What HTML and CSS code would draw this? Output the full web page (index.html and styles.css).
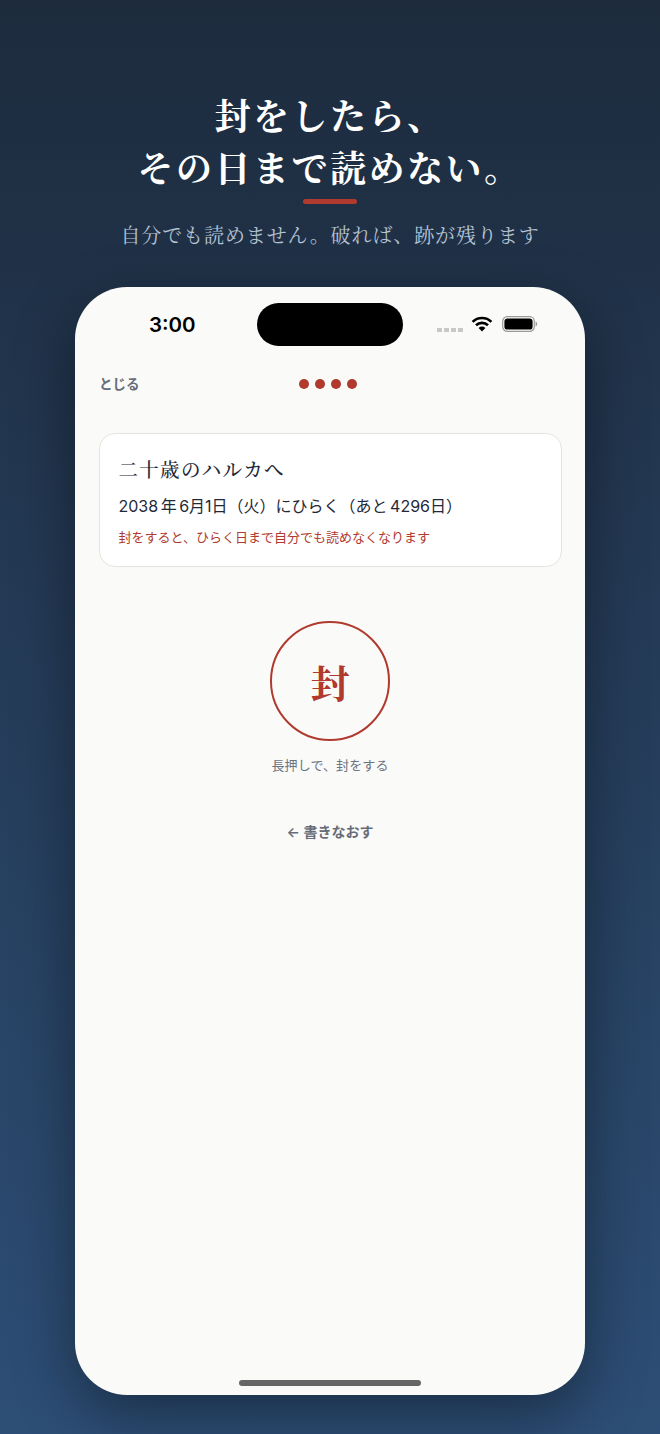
FILE: index.html
```html
<!DOCTYPE html>
<html lang="ja">
<head>
<meta charset="utf-8">
<title>封をしたら</title>
<link rel="stylesheet" href="styles.css">
</head>
<body>
<div class="page">
  <header class="hero">
    <h1 class="hero-title">封をしたら、<br>その日まで読めない。</h1>
    <div class="hero-rule"></div>
    <p class="hero-sub">自分でも読めません。破れば、跡が残ります</p>
  </header>
  <main class="phone">
    <div class="status">
      <span class="time">3:00</span>
      <div class="island"></div>
      <div class="status-icons">
        <div class="signal"><i></i><i></i><i></i><i></i></div>
        <svg class="wifi" width="22" height="16" viewBox="0 0 22 16"><path fill="none" stroke="#000" stroke-width="2.6" d="M1.6 5.9a13.4 13.4 0 0 1 18.8 0"/><path fill="none" stroke="#000" stroke-width="2.6" d="M5 9.3a8.6 8.6 0 0 1 12 0"/><path d="M7.6 11.9a4.9 4.9 0 0 1 6.8 0L11 15.4z"/></svg>
        <svg class="battery" width="36" height="16" viewBox="0 0 36 16"><rect x=".7" y=".7" width="31.6" height="14.6" rx="4.6" fill="none" stroke="#9a9a9a" stroke-width="1.2"/><rect x="2.4" y="2.4" width="28.2" height="11.2" rx="3.2"/><path d="M33.6 5.6c1 .3 1.6 1.3 1.6 2.4s-.6 2.1-1.6 2.4z" fill="#9a9a9a"/></svg>
      </div>
    </div>
    <nav class="topbar">
      <span class="close">とじる</span>
      <div class="dots"><i></i><i></i><i></i><i></i></div>
    </nav>
    <section class="card">
      <h2 class="card-title">二十歳のハルカへ</h2>
      <p class="card-date">2038 年 6月1日（火）にひらく（あと 4296日）</p>
      <p class="card-note">封をすると、ひらく日まで自分でも読めなくなります</p>
    </section>
    <div class="seal-wrap">
      <div class="seal">封</div>
      <p class="seal-hint">長押しで、封をする</p>
      <p class="back">← 書きなおす</p>
    </div>
    <div class="home"></div>
  </main>
</div>
</body>
</html>
```
FILE: styles.css
```css
* { box-sizing: border-box; }
html, body { margin: 0; padding: 0; }
body {
  width: 660px;
  height: 1434px;
  overflow: hidden;
  font-family: "Inter", "Noto Sans CJK JP", "Noto Sans", sans-serif;
  background: linear-gradient(180deg, #1d2b3d 0%, #2d4e76 100%);
}
.page {
  height: 1434px;
  display: flex;
  flex-direction: column;
  align-items: center;
  padding-top: 89px;
}
.hero { text-align: center; height: 198px; }
.hero-title {
  margin: 0;
  font-family: "Noto Serif CJK JP", "Noto Sans CJK JP", serif;
  font-weight: 700;
  font-size: 36px;
  line-height: 52px;
  letter-spacing: 2.5px;
  color: #fff;
}
.hero-rule {
  width: 54px;
  height: 5px;
  margin: 6px auto 0;
  border-radius: 3px;
  background: #b03a2e;
}
.hero-sub {
  margin: 16px 0 0;
  font-family: "Noto Serif CJK JP", "Noto Sans CJK JP", serif;
  font-size: 20px;
  line-height: 30px;
  letter-spacing: 0.9px;
  color: #b4c3d4;
}
.phone {
  position: relative;
  width: 510px;
  height: 1108px;
  border-radius: 52px;
  background: #fafaf8;
  box-shadow: 0 20px 60px rgba(0, 0, 0, 0.4);
  padding: 0 23.5px;
  overflow: hidden;
}
.status {
  height: 75px;
  margin: 0 -23.5px;
  position: relative;
}
.time {
  position: absolute;
  left: 74px;
  top: 25px;
  font-family: "Inter", sans-serif;
  font-size: 20.5px;
  font-weight: 600;
  line-height: 26px;
  color: #000;
}
.island {
  position: absolute;
  left: 182px;
  top: 16px;
  width: 146px;
  height: 43px;
  border-radius: 22px;
  background: #000;
}
.status-icons {
  position: absolute;
  left: 362px;
  top: 29px;
  display: flex;
  align-items: center;
  gap: 8px;
}
.signal { display: flex; gap: 2px; margin-top: 11px; }
.signal i { width: 5px; height: 4px; background: #c8c8c8; }
.wifi { margin-right: 1px; }
.topbar {
  height: 44px;
  display: flex;
  align-items: center;
  position: relative;
  top: -1px;
}
.close {
  font-size: 13.5px;
  font-weight: 600;
  margin-left: 0.5px;
  color: #666c78;
}
.dots {
  position: absolute;
  left: 200.5px;
  top: 18px;
  display: flex;
  gap: 6px;
}
.dots i {
  width: 10px;
  height: 10px;
  border-radius: 50%;
  background: #b03a2e;
}
.card {
  margin-top: 27px;
  height: 133.5px;
  border: 1px solid #e4e4e1;
  border-radius: 16px;
  background: #fff;
  padding: 21px 19px;
}
.card-title {
  margin: 0;
  font-family: "Noto Serif CJK JP", "Noto Sans CJK JP", serif;
  font-size: 19.5px;
  font-weight: 500;
  line-height: 28px;
  letter-spacing: 1.3px;
  color: #1f2937;
}
.card-date {
  margin: 11px 0 0;
  font-size: 16px;
  line-height: 24px;
  word-spacing: -2px;
  color: #1f2937;
  white-space: nowrap;
}
.card-note {
  margin: 10px 0 0;
  font-size: 13px;
  line-height: 18px;
  color: #b03a2e;
  white-space: nowrap;
}
.seal-wrap {
  margin-top: 54px;
  display: flex;
  flex-direction: column;
  align-items: center;
}
.seal {
  width: 120px;
  height: 120px;
  border: 2.5px solid #b03a2e;
  border-radius: 50%;
  display: flex;
  align-items: center;
  justify-content: center;
  font-family: "Noto Serif CJK JP", "Noto Sans CJK JP", serif;
  font-size: 39px;
  font-weight: 700;
  color: #b03a2e;
}
.seal-hint {
  margin: 14px 0 0;
  font-size: 13px;
  letter-spacing: 0.1px;
  line-height: 20px;
  color: #6b7280;
}
.back {
  margin: 47px 0 0;
  font-size: 14px;
  font-weight: 600;
  line-height: 20px;
  color: #666c78;
}
.home {
  position: absolute;
  left: 164px;
  bottom: 9px;
  width: 182px;
  height: 6px;
  border-radius: 3px;
  background: #666;
}
```
